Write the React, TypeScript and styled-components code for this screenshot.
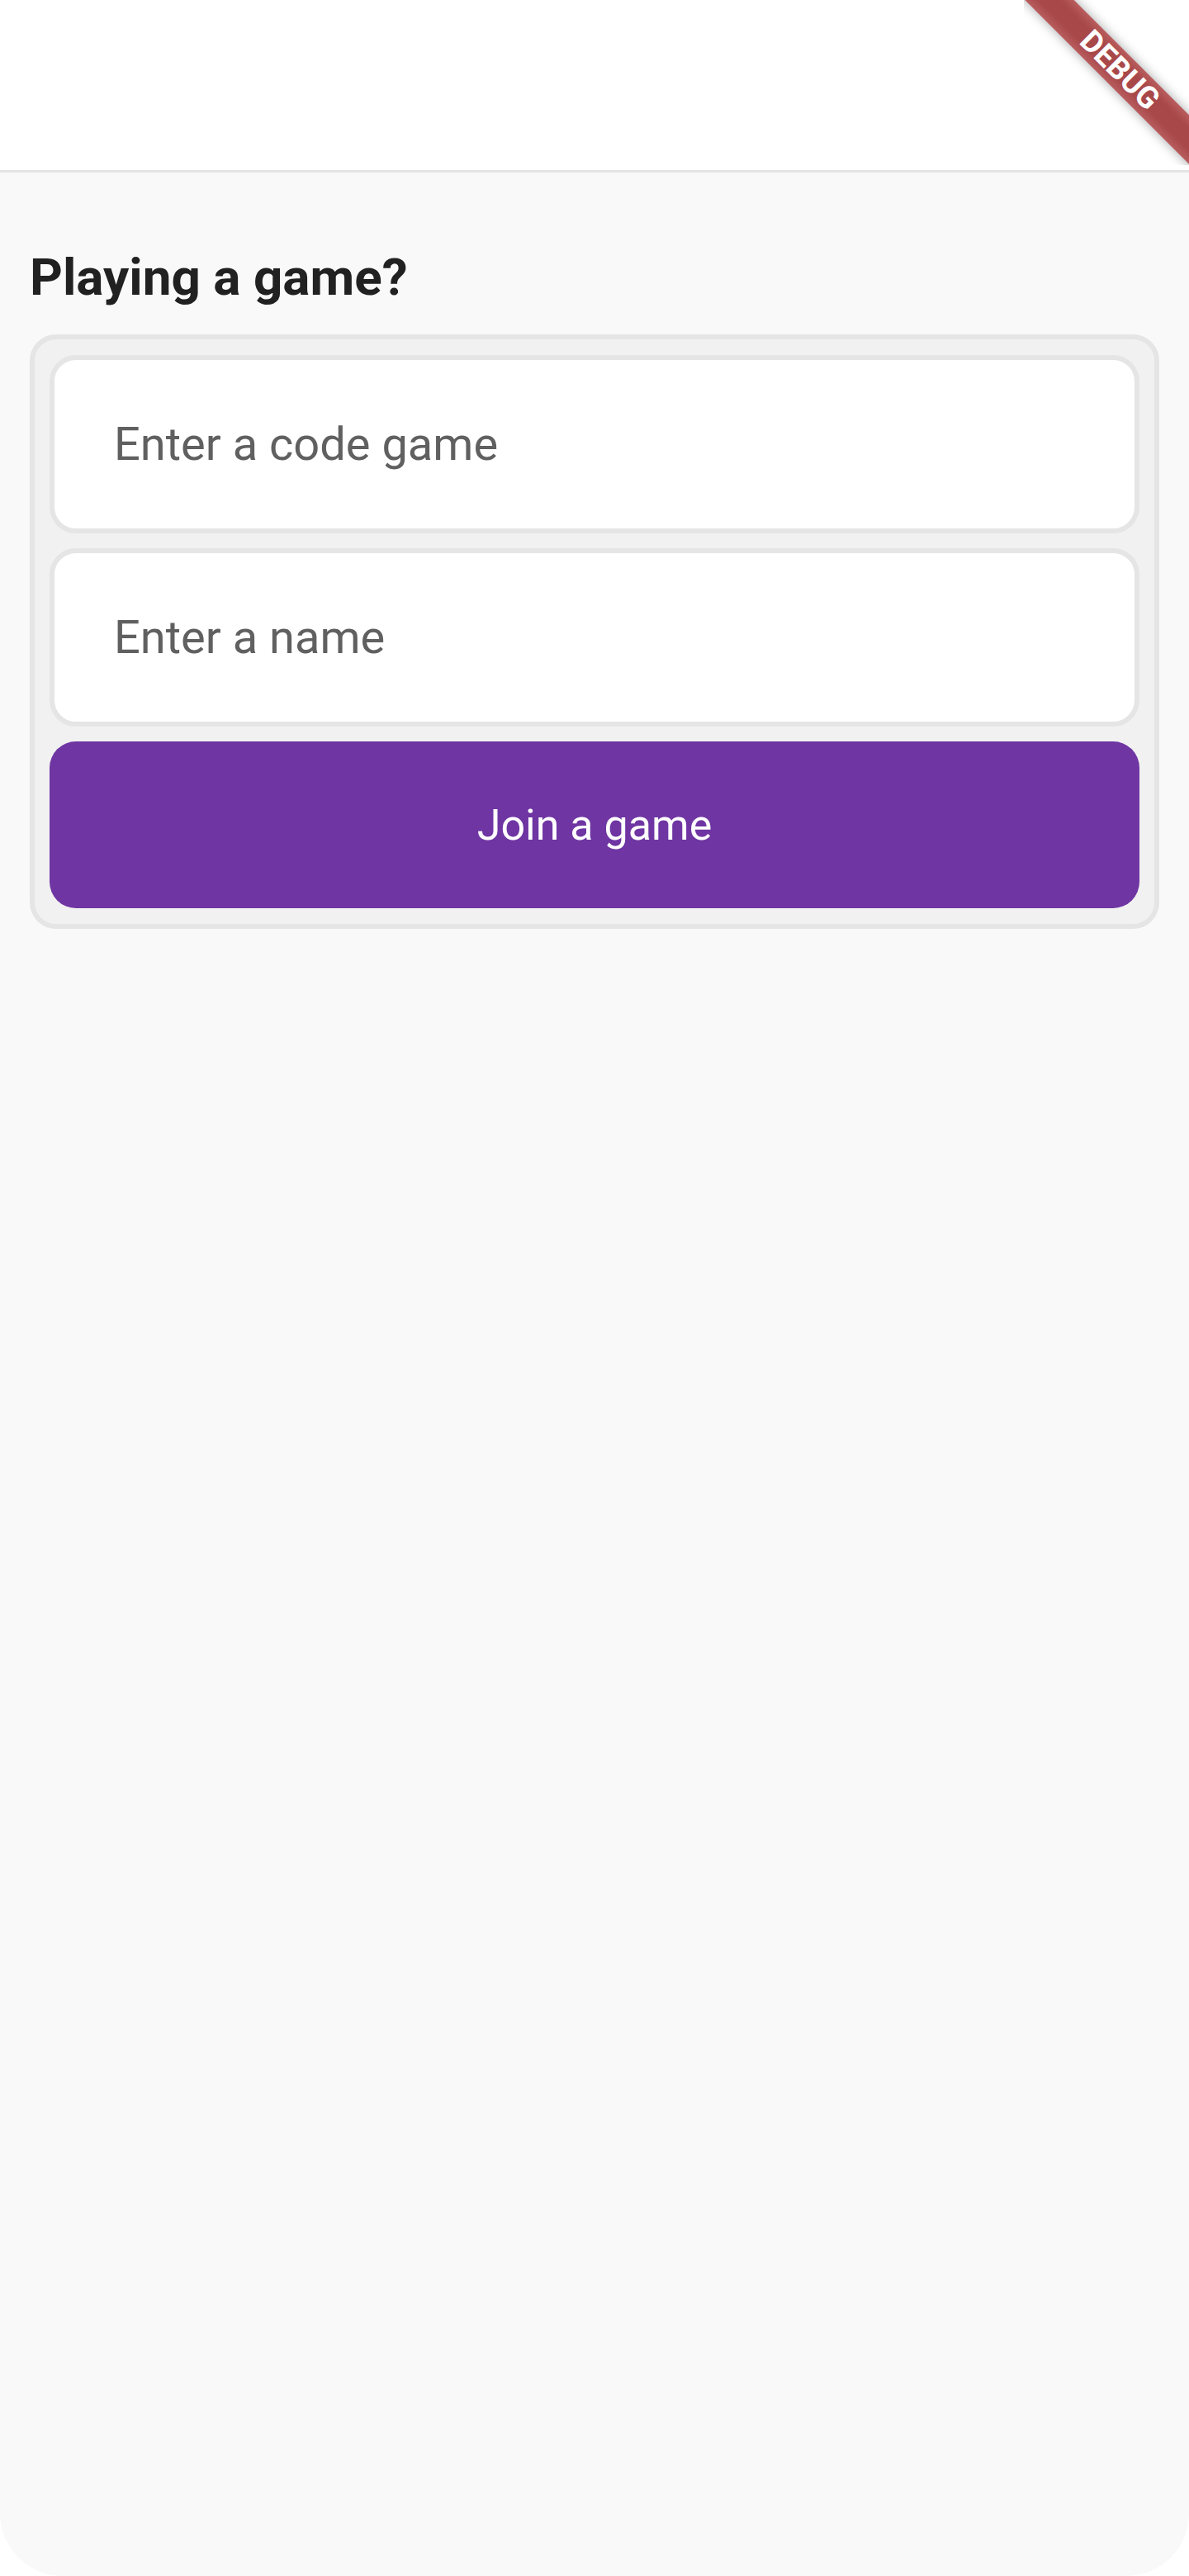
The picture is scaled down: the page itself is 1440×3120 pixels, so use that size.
import React from 'react';
import styled, { createGlobalStyle } from 'styled-components';

const GlobalStyle = createGlobalStyle`
  html, body {
    margin: 0;
    padding: 0;
    background: #ffffff;
  }
  * {
    box-sizing: border-box;
  }
`;

const App = () => {
  return (
    <>
      <GlobalStyle />
      <Screen>
        <Header />
        <Main>
          <Title>Playing a game?</Title>
          <Card>
            <Field type='text' placeholder='Enter a code game' />
            <Field type='text' placeholder='Enter a name' />
            <JoinButton type='button'>Join a game</JoinButton>
          </Card>
        </Main>
        <Ribbon>
          <Band>DEBUG</Band>
        </Ribbon>
      </Screen>
    </>
  );
};

export default App;

// Styled components
const Screen = styled.div`
  position: relative;
  display: flex;
  flex-direction: column;
  height: 3120px;
  background: #f9f9f9;
  border-radius: 0 0 76px 76px;
  overflow: hidden;
  font-family: Roboto, 'Noto Sans', sans-serif;
`;

const Header = styled.header`
  flex: none;
  height: 209px;
  background: #ffffff;
  border-bottom: 3px solid #e4e4e4;
`;

const Main = styled.main`
  display: flex;
  flex-direction: column;
  padding: 96px 36px 0;
`;

const Title = styled.h1`
  margin: 0 0 38px;
  font-size: 62px;
  line-height: 1;
  font-weight: 700;
  color: #212121;
`;

const Card = styled.div`
  display: flex;
  flex-direction: column;
  gap: 18px;
  padding: 19px 18px;
  background: #f1f1f1;
  border: 6px solid #e5e5e5;
  border-radius: 32px;
`;

const Field = styled.input`
  height: 216px;
  width: 100%;
  padding: 0 0 0 72px;
  background: #ffffff;
  border: 6px solid #e5e5e5;
  border-radius: 32px;
  font-family: Roboto, 'Noto Sans', sans-serif;
  font-size: 56px;
  color: #212121;
  outline: none;

  &::placeholder {
    color: #606060;
  }
`;

const JoinButton = styled.button`
  height: 202px;
  width: 100%;
  border: none;
  border-radius: 32px;
  background: #6e35a3;
  color: #ffffff;
  font-family: Roboto, 'Noto Sans', sans-serif;
  font-size: 52px;
  font-weight: 400;
  cursor: pointer;
`;

const Ribbon = styled.div`
  position: absolute;
  top: 0;
  right: 0;
  width: 200px;
  height: 200px;
  overflow: hidden;
  pointer-events: none;
`;

const Band = styled.div`
  position: absolute;
  left: -34px;
  top: 64px;
  width: 300px;
  height: 42px;
  transform: rotate(45deg);
  background: linear-gradient(
    to bottom,
    #b95d5f 0%,
    #a84849 28%,
    #a84849 72%,
    #b95d5f 100%
  );
  box-shadow: 0 0 14px rgba(0, 0, 0, 0.35);
  color: #ffffff;
  font-family: Roboto, 'Noto Sans', sans-serif;
  font-size: 37px;
  font-weight: 700;
  line-height: 42px;
  text-align: center;
`;
